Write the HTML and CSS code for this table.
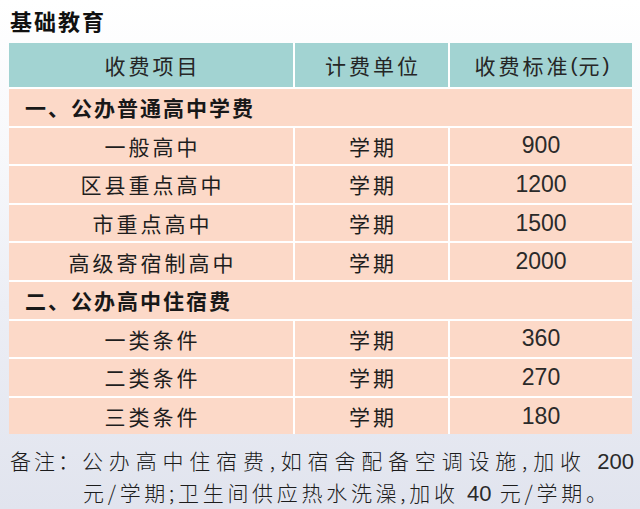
FILE: index.html
```html
<!DOCTYPE html>
<html lang="zh-CN">
<head>
<meta charset="utf-8">
<title>基础教育</title>
<link rel="stylesheet" href="styles.css">
</head>
<body>
<div class="page">
  <h1 class="title">基础教育</h1>
  <div class="table">
    <div class="cell head">收费项目</div>
    <div class="cell head">计费单位</div>
    <div class="cell head">收费标准<span class="paren">(</span>元<span class="paren">)</span></div>

    <div class="cell section">一、公办普通高中学费</div>

    <div class="cell">一般高中</div>
    <div class="cell">学期</div>
    <div class="cell num">900</div>

    <div class="cell">区县重点高中</div>
    <div class="cell">学期</div>
    <div class="cell num">1200</div>

    <div class="cell">市重点高中</div>
    <div class="cell">学期</div>
    <div class="cell num">1500</div>

    <div class="cell">高级寄宿制高中</div>
    <div class="cell">学期</div>
    <div class="cell num">2000</div>

    <div class="cell section">二、公办高中住宿费</div>

    <div class="cell">一类条件</div>
    <div class="cell">学期</div>
    <div class="cell num">360</div>

    <div class="cell">二类条件</div>
    <div class="cell">学期</div>
    <div class="cell num">270</div>

    <div class="cell">三类条件</div>
    <div class="cell">学期</div>
    <div class="cell num">180</div>
  </div>
  <div class="note">
    <span class="note-label">备注：</span>
    <div class="note-lines">
      <p class="line line-1">公办高中住宿费,如宿舍配备空调设施,加收 <span class="digits">200</span></p>
      <p class="line line-2">元/学期;卫生间供应热水洗澡,加收 <span class="digits">40</span> 元/学期。</p>
    </div>
  </div>
</div>
</body>
</html>
```
FILE: styles.css
```css
html, body {
  margin: 0;
  padding: 0;
}
body {
  width: 640px;
  height: 509px;
  overflow: hidden;
  background: linear-gradient(180deg, #ffffff 0%, #f7f8fb 30%, #eceef5 60%, #e1e4ee 100%);
  font-family: "Noto Sans CJK SC", "Noto Sans", sans-serif;
  color: #1f1f1f;
}
.page {
  padding: 6px 8px 0 9px;
}
.title {
  margin: 0 0 9px 1px;
  font-size: 22px;
  line-height: 28px;
  font-weight: 700;
  letter-spacing: 2px;
  color: #111111;
}
.table {
  width: 623px;
  display: grid;
  grid-template-columns: 284px 153px 182px;
  grid-template-rows: 44px;
  grid-auto-rows: 36.6px;
  gap: 2px;
  background: #ffffff;
}
.cell {
  background: #fcd9c8;
  display: flex;
  align-items: center;
  justify-content: center;
  font-size: 21px;
  letter-spacing: 3px;
  padding-left: 3px;
  color: #1e1e1e;
}
.head {
  background: #a2d3d2;
  color: #262626;
}
.paren {
  font-family: "Liberation Sans", sans-serif;
  letter-spacing: 1px;
}
.section {
  grid-column: 1 / -1;
  justify-content: flex-start;
  padding-left: 16px;
  font-weight: 700;
  letter-spacing: 2px;
  color: #181818;
}
.num {
  font-family: "Liberation Sans", sans-serif;
  font-size: 23px;
  letter-spacing: 0;
  padding-left: 0;
  color: #2a2a2a;
}
.note {
  display: flex;
  align-items: flex-start;
  margin-top: 11px;
  padding-left: 1px;
  font-size: 21px;
  line-height: 30px;
  color: #1c1c1c;
  font-weight: 300;
}
.note-label {
  flex: none;
  width: 72px;
  letter-spacing: 3px;
}
.note-lines {
  display: flex;
  flex-direction: column;
}
.line {
  margin: 0;
  white-space: nowrap;
  text-align: justify;
  text-align-last: justify;
}
.line-1 {
  width: 552px;
  letter-spacing: 4.4px;
}
.line-2 {
  width: 514px;
  margin-left: 1px;
  letter-spacing: 3.7px;
}
.digits {
  font-family: "Liberation Sans", sans-serif;
  font-size: 22px;
  font-weight: 400;
  letter-spacing: 0;
  color: #2a2a2a;
}
```
